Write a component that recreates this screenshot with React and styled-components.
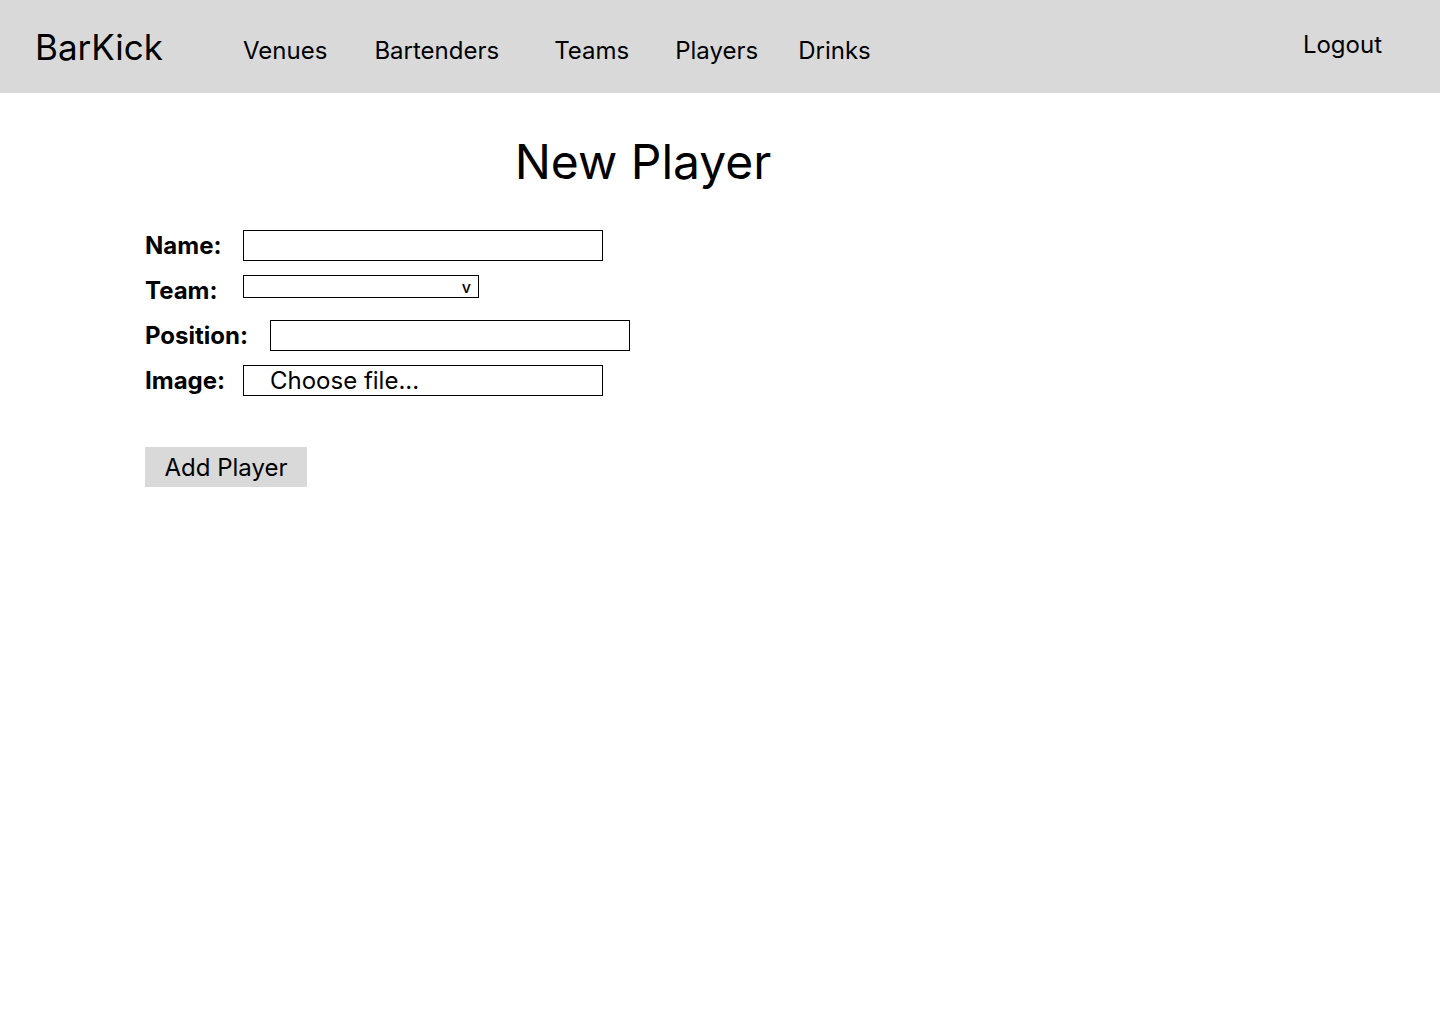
import React, { useState } from 'react'
import styled, { createGlobalStyle } from 'styled-components'

const GlobalStyle = createGlobalStyle`
  body {
    margin: 0;
    background: #fff;
    font-family: Inter, "Noto Sans", sans-serif;
    color: #000;
  }
  * { box-sizing: border-box; }
`;

const links = [
  { label: 'Venues', ml: 80 },
  { label: 'Bartenders', ml: 47 },
  { label: 'Teams', ml: 55 },
  { label: 'Players', ml: 46 },
  { label: 'Drinks', ml: 40 },
];

const App = () => {
  const [name, setName] = useState("");
  const [position, setPosition] = useState("");
  const [team, setTeam] = useState("");

  const onSubmit = e => {
    e.preventDefault();
  }

  return (
    <>
      <GlobalStyle />
      <Header>
        <Logo>BarKick</Logo>
        <Nav>
          {links.map(link => (
            <NavLink key={link.label} $ml={link.ml}>{link.label}</NavLink>
          ))}
        </Nav>
        <Logout>Logout</Logout>
      </Header>
      <Main>
        <Title>New Player</Title>
        <Form onSubmit={onSubmit}>
          <Row>
            <Label $w={98}>Name:</Label>
            <TextInput type="text" value={name} onChange={e => setName(e.target.value)} />
          </Row>
          <Row>
            <Label $w={98}>Team:</Label>
            <SelectWrap>
              <Select value={team} onChange={e => setTeam(e.target.value)}>
                <option value=""></option>
              </Select>
              <Chevron>v</Chevron>
            </SelectWrap>
          </Row>
          <Row>
            <Label $w={125}>Position:</Label>
            <TextInput type="text" value={position} onChange={e => setPosition(e.target.value)} />
          </Row>
          <Row>
            <Label $w={98}>Image:</Label>
            <FileBox>Choose file...</FileBox>
          </Row>
          <SubmitBtn type="submit">Add Player</SubmitBtn>
        </Form>
      </Main>
    </>
  )
}

export default App;

const Header = styled.header`
  height: 93px;
  background-color: #d9d9d9;
  display: flex;
  align-items: flex-start;
  padding: 0 58px 0 35px;
`;

const Logo = styled.div`
  font-size: 35px;
  line-height: 42px;
  margin-top: 26px;
`;

const Nav = styled.nav`
  display: flex;
  flex: 1;
`;

const NavLink = styled.a`
  font-size: 24px;
  line-height: 29px;
  margin-top: 36px;
  margin-left: ${p => p.$ml}px;
  cursor: pointer;
`;

const Logout = styled.a`
  font-size: 24px;
  line-height: 29px;
  margin-top: 30px;
  cursor: pointer;
`;

const Main = styled.main`
  width: 996px;
  margin-left: 145px;
`;

const Title = styled.h1`
  margin: 40px 0 0 0;
  font-size: 48px;
  font-weight: 400;
  line-height: 58px;
  text-align: center;
`;

const Form = styled.form`
  margin-top: 39px;
  display: flex;
  flex-direction: column;
  align-items: flex-start;
`;

const Row = styled.div`
  display: flex;
  align-items: center;
  height: 31px;
  margin-bottom: 14px;
`;

const Label = styled.label`
  width: ${p => p.$w}px;
  font-size: 24px;
  font-weight: 700;
  line-height: 29px;
`;

const TextInput = styled.input`
  width: 360px;
  height: 31px;
  border: 1px solid #000;
  border-radius: 0;
  padding: 0 8px;
  font: inherit;
  font-size: 20px;
  outline: none;
`;

const SelectWrap = styled.div`
  position: relative;
  align-self: flex-start;
  width: 236px;
  height: 23px;
`;

const Select = styled.select`
  appearance: none;
  width: 100%;
  height: 100%;
  border: 1px solid #000;
  border-radius: 0;
  background: #fff;
  font: inherit;
  font-size: 16px;
  outline: none;
`;

const Chevron = styled.span`
  position: absolute;
  right: 8px;
  top: 3px;
  font-size: 16px;
  font-weight: 500;
  line-height: 18px;
  pointer-events: none;
`;

const FileBox = styled.div`
  width: 360px;
  height: 31px;
  border: 1px solid #000;
  padding-left: 26px;
  font-size: 24px;
  line-height: 29px;
  cursor: pointer;
`;

const SubmitBtn = styled.button`
  margin-top: 37px;
  width: 162px;
  height: 40px;
  border: none;
  border-radius: 0;
  background: #d9d9d9;
  font-family: inherit;
  font-size: 24px;
  color: #000;
  padding: 0;
  cursor: pointer;
`;
